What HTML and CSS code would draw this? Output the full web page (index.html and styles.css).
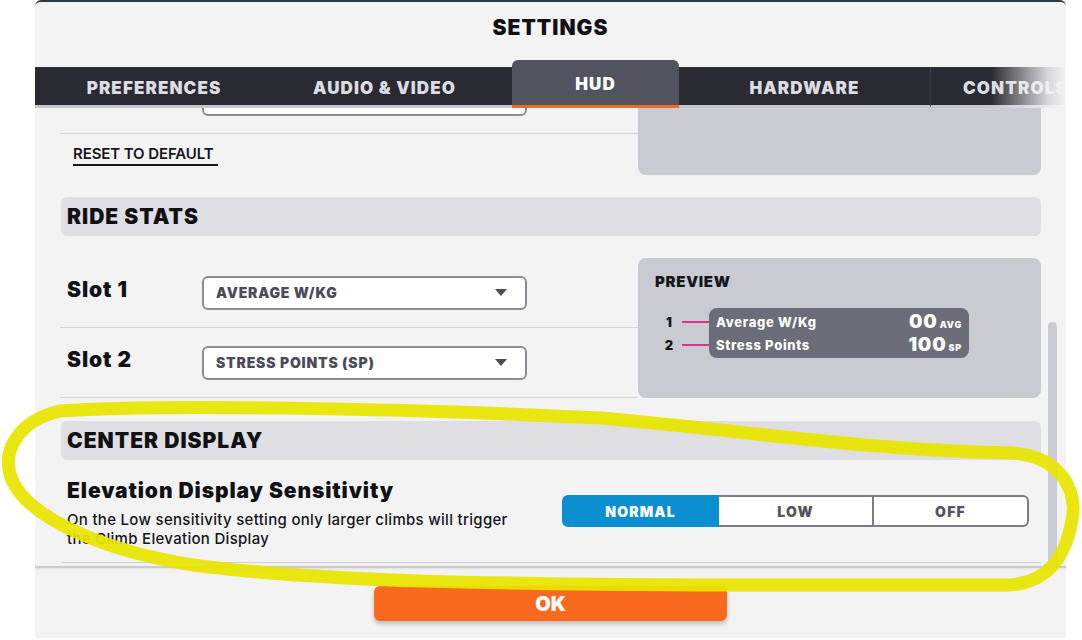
FILE: index.html
```html
<!DOCTYPE html>
<html lang="en">
<head>
<meta charset="utf-8">
<title>Settings</title>
<link rel="stylesheet" href="styles.css">
</head>
<body>
<div class="panel">
  <div class="title">SETTINGS</div>
  <nav class="tabs">
    <div class="tab t1">PREFERENCES</div>
    <div class="tab t2">AUDIO &amp; VIDEO</div>
    <div class="tab active t3">HUD</div>
    <div class="tab t4">HARDWARE</div>
    <div class="tab t5">CONTROLS</div>
  </nav>
  <div class="scroll">
    <div class="content">
      <div class="block block-top">
        <div class="col-left">
          <div class="row"><span class="label"></span><div class="select"></div></div>
          <div class="reset"><span>RESET TO DEFAULT</span></div>
        </div>
        <div class="preview preview-top"></div>
      </div>

      <div class="section-head">RIDE STATS</div>
      <div class="block block-stats">
        <div class="col-left">
          <div class="row"><span class="label">Slot 1</span><div class="select"><span>AVERAGE W/KG</span><i class="caret"></i></div></div>
          <div class="row"><span class="label">Slot 2</span><div class="select"><span>STRESS POINTS (SP)</span><i class="caret"></i></div></div>
        </div>
        <div class="preview">
          <div class="preview-title">PREVIEW</div>
          <div class="hud-wrap">
            <div class="legend">
              <div class="leg"><span class="num">1</span><span class="line"></span></div>
              <div class="leg"><span class="num">2</span><span class="line"></span></div>
            </div>
            <div class="hud">
              <div class="hud-row"><span class="hud-name">Average W/Kg</span><span class="hud-val">00<small>AVG</small></span></div>
              <div class="hud-row"><span class="hud-name">Stress Points</span><span class="hud-val">100<small>SP</small></span></div>
            </div>
          </div>
        </div>
      </div>

      <div class="section-head head-center">CENTER DISPLAY</div>
      <div class="setting">
        <div class="setting-text">
          <div class="setting-title">Elevation Display Sensitivity</div>
          <div class="setting-desc">On the Low sensitivity setting only larger climbs will trigger<br>the Climb Elevation Display</div>
        </div>
        <div class="segmented">
          <div class="seg on">NORMAL</div>
          <div class="seg">LOW</div>
          <div class="seg">OFF</div>
        </div>
      </div>
    </div>
    <div class="scrollbar"></div>
  </div>
  <div class="footer"><div class="ok">OK</div></div>
</div>

<svg class="annotation" width="1082" height="640" viewBox="0 0 1082 640" aria-hidden="true">
  <path d="M 600 418 C 760 432, 860 450, 1010 453 C 1060 455, 1078 490, 1072 520 C 1066 555, 1050 582, 1010 585 L 700 585 C 500 584, 330 582, 200 566 C 110 553, 30 520, 12 480 C 0 450, 20 420, 60 411 C 150 404, 400 408, 600 418 Z" fill="none" stroke="#e8e400" stroke-width="13" stroke-linecap="round" stroke-linejoin="round" opacity="0.93"/>
</svg>
</body>
</html>
```

FILE: styles.css
```css
* { box-sizing: border-box; }

html, body {
  margin: 0;
  padding: 0;
  background: #ffffff;
  width: 1082px;
  height: 640px;
  overflow: hidden;
  font-family: Inter, "Open Sans", "Liberation Sans", sans-serif;
  color: #15151a;
}

.panel {
  position: relative;
  margin-left: 35px;
  width: 1031px;
  height: 638px;
  background: #f3f3f4;
  border-top: 2px solid #2f3946;
  border-radius: 6px 6px 0 0;
  display: flex;
  flex-direction: column;
  overflow: hidden;
}

/* Title */
.title {
  height: 58px;
  display: flex;
  align-items: center;
  justify-content: center;
  padding-bottom: 8px;
  font-size: 21px;
  font-weight: 900;
  letter-spacing: 1px;
  color: #111114;
}

/* Tabs */
.tabs {
  position: relative;
  height: 48px;
  display: flex;
  align-items: flex-end;
}
.tabs::after {
  content: "";
  position: absolute;
  right: 0;
  top: 0;
  bottom: 0;
  width: 75px;
  background: linear-gradient(to right, rgba(243,243,244,0), rgba(243,243,244,0.85) 75%, #f3f3f4);
}
.tab {
  height: 41px;
  background: #2a2a32;
  border-bottom: 3px solid #c6c6ce;
  display: flex;
  align-items: center;
  justify-content: center;
  padding-top: 3px;
  color: #dcdce2;
  font-size: 17px;
  font-weight: 900;
  letter-spacing: 1.1px;
  flex: none;
  white-space: nowrap;
}
.t1 { width: 238px; }
.t2 { width: 239px; padding-right: 16px; }
.t3 { width: 167px; }
.t4 { width: 252px; border-right: 1px solid #3a3a44; }
.t5 { width: 140px; justify-content: flex-start; padding-left: 32px; }
.tab.active {
  height: 48px;
  background: #51535f;
  border-bottom-color: #f26a22;
  border-radius: 6px 6px 0 0;
  color: #ffffff;
  padding-top: 3px;
}

/* Scroll area */
.scroll {
  position: relative;
  height: 460px;
  overflow: hidden;
  border-bottom: 2px solid #cbcbd0;
  box-shadow: 0 1px 2px rgba(0,0,0,0.08);
}
.content {
  padding: 0 25px 0 26px;
}
.scrollbar {
  position: absolute;
  left: 1013px;
  top: 214px;
  bottom: 0;
  width: 9px;
  background: #c9cad2;
  border-radius: 5px 5px 0 0;
}

.block {
  display: grid;
  grid-template-columns: 577px 403px;
}
.block-top { margin-top: -44px; }
.block-stats { margin-top: 22px; }

.row {
  height: 70px;
  display: flex;
  align-items: center;
  border-bottom: 1px solid #d3d3d8;
  margin-left: -1px;
}
.label {
  width: 142px;
  padding-left: 7px;
  font-size: 21px;
  font-weight: 900;
  letter-spacing: 0.9px;
  color: #121216;
  padding-bottom: 6px;
}
.select {
  width: 325px;
  height: 34px;
  background: #ffffff;
  border: 2px solid #8c8c94;
  border-radius: 6px;
  display: flex;
  align-items: center;
  padding: 0 18px 0 12px;
  font-size: 14px;
  font-weight: 900;
  color: #4b4c57;
  letter-spacing: 0.8px;
}
.caret {
  margin-left: auto;
  width: 0;
  height: 0;
  border-left: 6px solid transparent;
  border-right: 6px solid transparent;
  border-top: 7px solid #4b4c57;
}

.reset {
  padding: 9px 0 0 12px;
}
.reset span {
  display: inline-block;
  font-size: 15px;
  font-weight: 600;
  color: #17171b;
  padding-bottom: 1px;
  padding-right: 4px;
  border-bottom: 2px solid #17171b;
  letter-spacing: -0.1px;
}

.preview {
  background: #c9cad2;
  border-radius: 8px;
  padding: 14px 17px;
}
.preview-top {
  height: 111px;
  border-radius: 0 0 8px 8px;
}
.preview-title {
  font-size: 15px;
  font-weight: 900;
  color: #17171b;
  letter-spacing: 0.7px;
}
.hud-wrap {
  margin-top: 17px;
  display: flex;
  align-items: flex-start;
}
.legend {
  padding-top: 2px;
  display: flex;
  flex-direction: column;
}
.leg {
  height: 23px;
  display: flex;
  align-items: center;
}
.num {
  width: 12px;
  margin-left: 8px;
  text-align: center;
  font-size: 13px;
  font-weight: 900;
  color: #17171b;
}
.line {
  width: 27px;
  height: 2px;
  margin-left: 7px;
  background: #e0318d;
}
.hud {
  width: 260px;
  height: 50px;
  background: #6b6d78;
  border-radius: 8px;
  padding: 2px 7px 0 7px;
}
.hud-row {
  height: 23px;
  display: flex;
  align-items: center;
  justify-content: space-between;
  color: #ffffff;
}
.hud-name {
  font-size: 13px;
  font-weight: 800;
  letter-spacing: 0.7px;
}
.hud-val {
  font-size: 19px;
  font-weight: 900;
  letter-spacing: 0.8px;
}
.hud-val small {
  font-size: 9px;
  font-weight: 900;
  margin-left: 2px;
}

.section-head {
  margin-top: 22px;
  height: 39px;
  background: #dfdfe3;
  border-radius: 6px;
  display: flex;
  align-items: center;
  padding-left: 6px;
  font-size: 21px;
  font-weight: 900;
  letter-spacing: 1px;
  color: #111114;
}
.head-center { margin-top: 23px; }

.setting {
  height: 103px;
  display: flex;
  align-items: center;
  justify-content: space-between;
  padding: 4px 12px 0 6px;
  border-bottom: 1px solid #cfcfd4;
}
.setting-title {
  font-size: 21px;
  font-weight: 900;
  color: #111114;
  letter-spacing: 0.9px;
}
.setting-desc {
  margin-top: 7px;
  font-size: 15px;
  font-weight: 500;
  line-height: 19px;
  color: #15151a;
  letter-spacing: 0.3px;
}
.segmented {
  display: flex;
  width: 467px;
  height: 32px;
  margin-top: -4px;
}
.seg {
  flex: 1;
  display: flex;
  align-items: center;
  justify-content: center;
  background: #ffffff;
  border: 2px solid #7c7c87;
  margin-left: -2px;
  font-size: 14px;
  font-weight: 900;
  color: #55555f;
  letter-spacing: 1.2px;
}
.seg:first-child { margin-left: 0; border-radius: 6px 0 0 6px; }
.seg:last-child { border-radius: 0 6px 6px 0; }
.seg.on {
  background: #0b8fd1;
  border-color: #0b8fd1;
  color: #ffffff;
  position: relative;
}

.footer {
  flex: 1;
  display: flex;
  justify-content: center;
  padding-top: 18px;
}
.ok {
  width: 353px;
  height: 35px;
  background: #f96a1e;
  border-radius: 6px;
  box-shadow: 0 3px 4px rgba(0,0,0,0.22);
  color: #ffffff;
  display: flex;
  align-items: center;
  justify-content: center;
  font-size: 20px;
  font-weight: 900;
}

.annotation {
  position: absolute;
  left: 0;
  top: 0;
  pointer-events: none;
}
```
